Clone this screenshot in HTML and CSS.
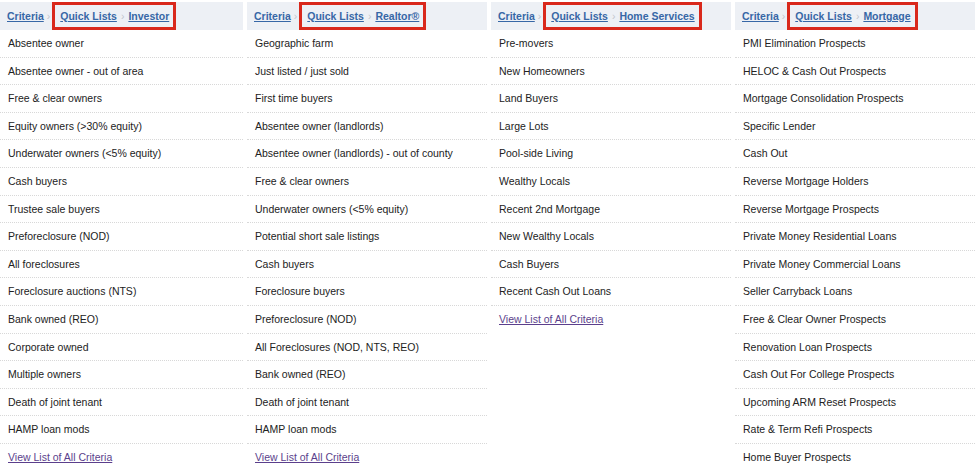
FILE: index.html
```html
<!DOCTYPE html>
<html lang="en">
<head>
  <meta charset="UTF-8" />
  <title>Quick Lists</title>
  <link rel="stylesheet" href="styles.css">
</head>
<body>

<div class="board">

  <!-- INVESTOR -->
  <div class="col">
    <div class="crumbs">
      <a href="#">Criteria</a><span class="sep first">›</span>
      <span class="mark"><a href="#">Quick Lists</a><span class="sep">›</span><a href="#">Investor</a></span>
    </div>
    <ul class="list">
      <li>Absentee owner</li>
      <li>Absentee owner - out of area</li>
      <li>Free &amp; clear owners</li>
      <li>Equity owners (&gt;30% equity)</li>
      <li>Underwater owners (&lt;5% equity)</li>
      <li>Cash buyers</li>
      <li>Trustee sale buyers</li>
      <li>Preforeclosure (NOD)</li>
      <li>All foreclosures</li>
      <li>Foreclosure auctions (NTS)</li>
      <li>Bank owned (REO)</li>
      <li>Corporate owned</li>
      <li>Multiple owners</li>
      <li>Death of joint tenant</li>
      <li>HAMP loan mods</li>
      <li class="more"><a href="#">View List of All Criteria</a></li>
    </ul>
  </div>

  <!-- REALTOR -->
  <div class="col">
    <div class="crumbs">
      <a href="#">Criteria</a><span class="sep first">›</span>
      <span class="mark"><a href="#">Quick Lists</a><span class="sep">›</span><a href="#">Realtor®</a></span>
    </div>
    <ul class="list">
      <li>Geographic farm</li>
      <li>Just listed / just sold</li>
      <li>First time buyers</li>
      <li>Absentee owner (landlords)</li>
      <li>Absentee owner (landlords) - out of county</li>
      <li>Free &amp; clear owners</li>
      <li>Underwater owners (&lt;5% equity)</li>
      <li>Potential short sale listings</li>
      <li>Cash buyers</li>
      <li>Foreclosure buyers</li>
      <li>Preforeclosure (NOD)</li>
      <li>All Foreclosures (NOD, NTS, REO)</li>
      <li>Bank owned (REO)</li>
      <li>Death of joint tenant</li>
      <li>HAMP loan mods</li>
      <li class="more"><a href="#">View List of All Criteria</a></li>
    </ul>
  </div>

  <!-- HOME SERVICES -->
  <div class="col">
    <div class="crumbs">
      <a href="#">Criteria</a><span class="sep first">›</span>
      <span class="mark"><a href="#">Quick Lists</a><span class="sep">›</span><a href="#">Home Services</a></span>
    </div>
    <ul class="list">
      <li>Pre-movers</li>
      <li>New Homeowners</li>
      <li>Land Buyers</li>
      <li>Large Lots</li>
      <li>Pool-side Living</li>
      <li>Wealthy Locals</li>
      <li>Recent 2nd Mortgage</li>
      <li>New Wealthy Locals</li>
      <li>Cash Buyers</li>
      <li>Recent Cash Out Loans</li>
      <li class="more"><a href="#">View List of All Criteria</a></li>
    </ul>
  </div>

  <!-- MORTGAGE -->
  <div class="col">
    <div class="crumbs">
      <a href="#">Criteria</a><span class="sep first">›</span>
      <span class="mark"><a href="#">Quick Lists</a><span class="sep">›</span><a href="#">Mortgage</a></span>
    </div>
    <ul class="list">
      <li>PMI Elimination Prospects</li>
      <li>HELOC &amp; Cash Out Prospects</li>
      <li>Mortgage Consolidation Prospects</li>
      <li>Specific Lender</li>
      <li>Cash Out</li>
      <li>Reverse Mortgage Holders</li>
      <li>Reverse Mortgage Prospects</li>
      <li>Private Money Residential Loans</li>
      <li>Private Money Commercial Loans</li>
      <li>Seller Carryback Loans</li>
      <li>Free &amp; Clear Owner Prospects</li>
      <li>Renovation Loan Prospects</li>
      <li>Cash Out For College Prospects</li>
      <li>Upcoming ARM Reset Prospects</li>
      <li>Rate &amp; Term Refi Prospects</li>
      <li>Home Buyer Prospects</li>
    </ul>
  </div>

</div>

</body>
</html>
```

FILE: styles.css
```css
body, html {
  margin: 0;
  padding: 0;
  background: #fff;
  font-family: "Liberation Sans", Arial, sans-serif;
  overflow: hidden;
}

.board {
  display: grid;
  grid-template-columns: 243px 240px 240px 240px;
  column-gap: 4px;
  padding-top: 2px;
  width: 977px;
}

.crumbs {
  display: flex;
  align-items: stretch;
  height: 28px;
  padding-left: 7px;
  background: #edf0f5;
  font-size: 10.5px;
  font-weight: bold;
}

.crumbs a {
  color: #3767a6;
  align-self: center;
}

.sep {
  align-self: center;
  color: #c2c6cc;
  font-weight: normal;
  margin: 0 4px;
}

.sep.first {
  margin: 0 2px 0 3px;
}

.mark {
  display: flex;
  align-items: center;
  border: 3px solid #d9281b;
  padding: 0 4px 0 5px;
}

.list {
  list-style: none;
  margin: 0;
  padding: 0;
}

.list li {
  height: 26.6px;
  line-height: 27px;
  padding-left: 8px;
  font-size: 10.5px;
  color: #222;
  border-bottom: 1px dotted #d8d8d8;
  white-space: nowrap;
}

.list li.more {
  border-bottom: none;
}

.list li.more a {
  color: #5b3f8c;
}
```
